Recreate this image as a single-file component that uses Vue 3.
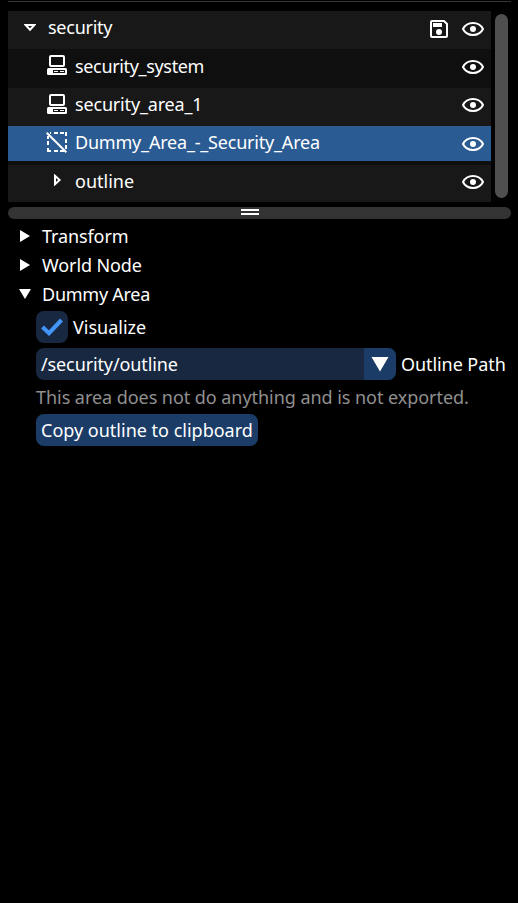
<script setup>
import { ref } from 'vue'

const nodes = ref([
  { name: 'security', kind: 'root' },
  { name: 'security_system', kind: 'system' },
  { name: 'security_area_1', kind: 'system' },
  { name: 'Dummy_Area_-_Security_Area', kind: 'area' },
  { name: 'outline', kind: 'leaf' },
])
const visualize = ref(true)
const path = ref('/security/outline')
</script>

<template>
  <main class="panel">
    <div class="rule"></div>
    <section class="hierarchy">
      <div class="tree">
        <div v-for="n in nodes" :key="n.name" class="row" :class="n.kind">
          <div class="icon">
            <svg v-if="n.kind === 'root'" width="12" height="8" viewBox="0 0 12 8">
              <path d="M1.6 1H10.4L6 5.8Z" fill="none" stroke="#fff" stroke-width="2" />
            </svg>
            <svg v-else-if="n.kind === 'system'" width="20" height="20" viewBox="0 0 20 20">
              <rect x="3" y="1" width="14" height="10" rx="1" fill="none" stroke="#fff" stroke-width="2" />
              <rect x="0" y="13" width="20" height="7" rx="1.5" fill="#fff" />
              <path d="M6 15h12v3H6z" fill="#141414" />
              <path d="M7 16h4v1H7zM13 16h4v1h-4z" fill="#fff" />
            </svg>
            <svg v-else-if="n.kind === 'area'" width="22" height="22" viewBox="0 0 22 22">
              <path
                d="M4 1h1v2H4zM8 1h4v2H8zM14 1h4v2h-4zM19 1h2v4h-2zM19 8h2v4h-2zM19 14h2v4h-2zM1 5h2v3H1zM1 10h2v4H1zM1 17h2v2h2v2H1zM8 19h4v2H8zM14 19h4v2h-4z"
                fill="#fff"
              />
              <path d="M.7 1.7L20.3 21.3" stroke="#fff" stroke-width="2" />
            </svg>
            <svg v-else width="8" height="12" viewBox="0 0 8 12">
              <path d="M1 1.8V10.2L5.6 6Z" fill="none" stroke="#fff" stroke-width="2" />
            </svg>
          </div>
          <span class="name">{{ n.name }}</span>
          <svg v-if="n.kind === 'root'" class="save" width="18" height="18" viewBox="0 0 18 18">
            <path d="M1 2Q1 1 2 1H14L17 4V16Q17 17 16 17H2Q1 17 1 16Z" fill="none" stroke="#fff" stroke-width="2" />
            <rect x="3" y="3" width="9" height="4" fill="#fff" />
            <circle cx="9" cy="12" r="3" fill="#fff" />
          </svg>
          <svg class="eye" width="22" height="14" viewBox="0 0 22 14">
            <path d="M1 7C3 3 6.5 1 11 1S19 3 21 7C19 11 15.500 13 11 13S3 11 1 7Z" fill="none" stroke="#fff" stroke-width="2" />
            <circle cx="11" cy="7" r="3" fill="#fff" />
          </svg>
        </div>
      </div>
      <div class="scrollbar"><div class="thumb"></div></div>
    </section>
    <div class="splitter"><i></i><i></i></div>

    <section class="properties">
      <div class="header">
        <svg width="12" height="12" viewBox="0 0 12 12"><path d="M1 0L11 6L1 12Z" fill="#fff" /></svg>
        <span>Transform</span>
      </div>
      <div class="header">
        <svg width="12" height="12" viewBox="0 0 12 12"><path d="M1 0L11 6L1 12Z" fill="#fff" /></svg>
        <span>World Node</span>
      </div>
      <div class="header">
        <svg width="12" height="12" viewBox="0 0 12 12"><path d="M0 0H12L6 10Z" fill="#fff" /></svg>
        <span>Dummy Area</span>
      </div>
      <div class="body">
        <div class="field" @click="visualize = !visualize">
          <div class="check">
            <svg v-if="visualize" width="22" height="18" viewBox="0 0 22 18">
              <path d="M1.500 9L8 15.200L20.500 2" fill="none" stroke="#4296fa" stroke-width="4" />
            </svg>
          </div>
          <span>Visualize</span>
        </div>
        <div class="field">
          <div class="combo">
            <span class="value">{{ path }}</span>
            <div class="arrow">
              <svg width="18" height="15" viewBox="0 0 18 15"><path d="M.5 0H17.500L9 14.500Z" fill="#fff" /></svg>
            </div>
          </div>
          <span class="tight">Outline Path</span>
        </div>
        <p class="note">This area does not do anything and is not exported.</p>
        <button class="copy">Copy outline to clipboard</button>
      </div>
    </section>
  </main>
</template>

<style>
html,
body {
  background: #000;
}
</style>

<style scoped>
.panel {
  box-sizing: border-box;
  height: 903px;
  padding: 1px 7px 0 8px;
  overflow: hidden;
  background: #000;
  color: #fff;
  font: 18px/24px 'Noto Sans', sans-serif;
  white-space: nowrap;
}
svg {
  display: block;
  flex: none;
}
.rule {
  height: 1px;
  background: #363636;
}
.hierarchy {
  display: flex;
  margin-top: 9px;
  height: 191px;
}
.tree {
  width: 483px;
  background: #0f0f0f;
}
.row {
  box-sizing: border-box;
  display: flex;
  align-items: flex-start;
  height: 38px;
  padding: 4px 7px 0 0;
  background: #181818;
}
.row:nth-child(2) {
  height: 39px;
  padding-top: 5px;
  background: #0f0f0f;
}
.row.area {
  height: 35px;
  background: #2b5b93;
}
.row.leaf {
  height: 37px;
  margin-top: 4px;
}
.icon {
  width: 67px;
  flex: none;
}
.root .icon {
  width: 40px;
}
.root .icon svg {
  margin: 9px 0 0 16px;
}
.system .icon svg {
  margin: 1px 0 0 39px;
}
.row:nth-child(3) .icon svg {
  margin-top: 2px;
}
.area .icon svg {
  margin: 1px 0 0 38px;
}
.leaf .icon svg {
  margin: 5px 0 0 46px;
}
.name {
  flex: 1;
  letter-spacing: -0.25px;
}
.row:nth-child(2) .name {
  letter-spacing: -0.34px;
}
.row:nth-child(3) .name {
  letter-spacing: -0.17px;
}
.area .name {
  letter-spacing: -0.2px;
}
.leaf .name {
  letter-spacing: 0;
}
.save {
  margin: 5px 14px 0 0;
}
.eye {
  margin-top: 6px;
}
.root .eye,
.area .eye {
  margin-top: 7px;
}
.scrollbar {
  width: 20px;
  padding: 3px 3px 4px 4px;
  box-sizing: border-box;
  background: #020202;
}
.thumb {
  height: 184px;
  border-radius: 6.500px;
  background: #4f4f4f;
}
.splitter {
  display: flex;
  flex-direction: column;
  align-items: center;
  gap: 2px;
  box-sizing: border-box;
  height: 12px;
  margin-top: 5px;
  padding: 2px 19px 0 0;
  border-radius: 6px;
  background: #333;
}
.splitter i {
  width: 18px;
  height: 2px;
  background: #fff;
}
.properties {
  padding-top: 5px;
}
.header {
  display: flex;
  gap: 11px;
  height: 29px;
  padding-left: 11px;
  letter-spacing: -0.1px;
}
.header svg {
  margin-top: 6px;
}
.header:nth-child(3) {
  letter-spacing: -0.26px;
}
.header:nth-child(3) svg {
  margin-top: 7px;
}
.body {
  display: flex;
  flex-direction: column;
  align-items: flex-start;
  gap: 5px;
  padding-left: 28px;
}
.field {
  display: flex;
  align-items: center;
  gap: 5px;
  height: 32px;
}
.tight {
  letter-spacing: -0.07px;
}
.check {
  display: grid;
  place-items: center;
  width: 32px;
  height: 32px;
  border-radius: 8px;
  background: #182841;
}
.combo {
  display: flex;
  align-items: center;
  width: 360px;
  height: 32px;
  overflow: hidden;
  border-radius: 8px;
  background: #182841;
}
.value {
  flex: 1;
  padding-left: 5px;
  letter-spacing: -0.12px;
}
.arrow {
  display: grid;
  place-items: center;
  width: 32px;
  height: 32px;
  background: #1b3c66;
}
.note {
  margin: 0;
  height: 24px;
  color: #909090;
  letter-spacing: -0.05px;
}
.copy {
  width: 222px;
  height: 32px;
  padding: 0 5px;
  border: 0;
  border-radius: 8px;
  background: #1b3c66;
  color: #fff;
  font: inherit;
  text-align: left;
}
</style>
